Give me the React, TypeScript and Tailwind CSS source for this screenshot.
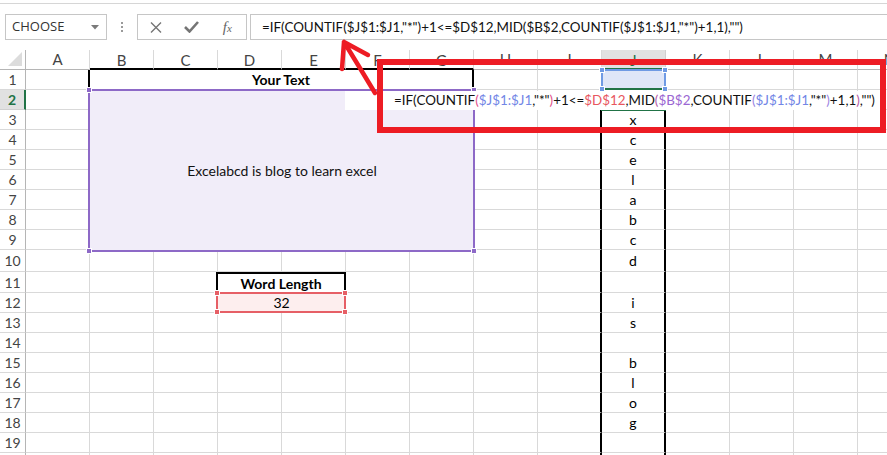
import React from 'react';

const cols = ['A', 'B', 'C', 'D', 'E', 'F', 'G', 'H', 'I', 'J', 'K', 'L', 'M', 'N'];
const jLetters: Record<number, string> = {
  3: 'x', 4: 'c', 5: 'e', 6: 'l', 7: 'a', 8: 'b', 9: 'c', 10: 'd',
  12: 'i', 13: 's', 15: 'b', 16: 'l', 17: 'o', 18: 'g',
};

function Handles({ cls }: { cls: string }) {
  return (
    <>
      <div className={`absolute -left-[4px] -top-[4px] h-[6px] w-[6px] border border-white ${cls}`} />
      <div className={`absolute -right-[4px] -top-[4px] h-[6px] w-[6px] border border-white ${cls}`} />
      <div className={`absolute -left-[4px] -bottom-[4px] h-[6px] w-[6px] border border-white ${cls}`} />
      <div className={`absolute -right-[4px] -bottom-[4px] h-[6px] w-[6px] border border-white ${cls}`} />
    </>
  );
}

function Formula({ colored }: { colored: boolean }) {
  const blue = colored ? 'text-[#7286e6]' : '';
  const red = colored ? 'text-[#e8575f]' : '';
  const purple = colored ? 'text-[#9a66d2]' : '';
  const pink = colored ? 'text-[#e2508a]' : '';
  const mauve = colored ? 'text-[#b45aa6]' : '';
  const lav = colored ? 'text-[#9c84e2]' : '';
  return (
    <span className="whitespace-pre">
      =IF(COUNTIF<span className={pink}>(</span>
      <span className={blue}>$J$1:$J1</span>,"*"<span className={pink}>)</span>+1&lt;=
      <span className={red}>$D$12</span>,MID<span className={mauve}>(</span>
      <span className={purple}>$B$2</span>,COUNTIF<span className={lav}>(</span>
      <span className={blue}>$J$1:$J1</span>,"*"<span className={lav}>)</span>+1,1
      <span className={mauve}>)</span>,"")
    </span>
  );
}

const grid = 'border-r border-b border-[#d9d9d9]';

function renderCell(r: number, c: number) {
  const key = `${r}-${c}`;
  if (r === 1 && c >= 2 && c <= 6) return null;
  if (r >= 2 && r <= 9 && c >= 1 && c <= 6 && !(r === 2 && c === 1)) return null;
  if ((r === 11 || r === 12) && c === 4) return null;

  if (r === 1 && c === 0)
    return <div key={key} className="border-b border-b-[#d9d9d9] border-r-2 border-r-black" />;
  if (r === 1 && c === 1)
    return (
      <div key={key} className="col-span-6 flex items-center justify-center border-b border-b-[#d9d9d9] border-r-2 border-r-black text-[14px] font-bold text-black">
        Your Text
      </div>
    );
  if (r === 2 && c === 1)
    return (
      <div key={key} className="relative col-span-6 row-span-8 flex items-center justify-center bg-[#f1edf9] text-[14px] text-[#111]">
        <span className="relative">Excelabcd is blog to learn excel</span>
        <div className="absolute -bottom-[2px] -left-[2px] -right-[1px] -top-[1px] z-10 border-2 border-[#8d69c7]">
          <Handles cls="bg-[#8d69c7]" />
        </div>
      </div>
    );
  if (r === 11 && c === 2)
    return <div key={key} className="border-b border-b-[#d9d9d9] border-r-2 border-r-black" />;
  if (r === 11 && c === 3)
    return (
      <div key={key} className="col-span-2 flex items-center justify-center border-b border-b-[#d9d9d9] border-r-2 border-t-2 border-r-black border-t-black pt-[1px] text-[14px] font-bold text-black">
        Word Length
      </div>
    );
  if (r === 12 && c === 3)
    return (
      <div key={key} className={`relative col-span-2 flex items-center justify-center bg-[#fdeeee] text-[14px] text-black ${grid}`}>
        32
        <div className="absolute -bottom-[1px] -left-[2px] -right-[1px] -top-[1px] z-10 border-2 border-[#e65f66]">
          <Handles cls="bg-[#e65f66]" />
        </div>
      </div>
    );
  if (r >= 3 && c === 8)
    return <div key={key} className="border-b border-b-[#d9d9d9] border-r-2 border-r-black" />;
  if (c === 9) {
    if (r === 1)
      return (
        <div key={key} className={`relative bg-[#dfe6f8] ${grid}`}>
          <div className="absolute -left-[1px] -right-[1px] -top-[1px] bottom-[1px] z-20 border-2 border-b-0 border-[#6f9ae4]">
            <Handles cls="bg-[#6f9ae4]" />
          </div>
        </div>
      );
    if (r === 2)
      return (
        <div key={key} className={`relative ${grid}`}>
          <div className="absolute -left-[1px] -right-[1px] -top-[2px] bottom-[-2px] z-10 border-y-2 border-[#217346]" />
        </div>
      );
    return (
      <div key={key} className="flex items-center justify-center border-b border-b-[#d9d9d9] border-r-2 border-r-black text-[14px] text-black">
        {jLetters[r] ?? ''}
      </div>
    );
  }
  return <div key={key} className={grid} />;
}

export default function App() {
  const rows = Array.from({ length: 20 }, (_, i) => i + 1);
  return (
    <div className="relative h-[455px] w-[887px] overflow-hidden bg-white font-['Lato',sans-serif] text-black">
      <div className="h-[50px] bg-white">
        <div className="h-[4px] border-b border-[#d6d6d6]" />
        <div className="mt-[10px] flex h-[26px] items-stretch">
          <div className="ml-[5px] flex w-[102px] items-center justify-between border border-[#c6c6c6] pl-[6px] pr-[6px] font-['Open_Sans',sans-serif] text-[13px] text-[#333]">
            <span>CHOOSE</span>
            <svg width="8" height="5" viewBox="0 0 8 5" className="mr-[1px]">
              <path d="M0 0 L8 0 L4 4.5 Z" fill="#7a7a7a" />
            </svg>
          </div>
          <div className="flex w-[30px] flex-col items-center justify-center gap-[2px]">
            <div className="h-[2px] w-[2px] bg-[#9a9a9a]" />
            <div className="h-[2px] w-[2px] bg-[#9a9a9a]" />
            <div className="h-[2px] w-[2px] bg-[#9a9a9a]" />
          </div>
          <div className="flex w-[110px] items-center border border-[#c6c6c6]">
            <div className="flex w-[36px] justify-center">
              <svg width="12" height="11" viewBox="0 0 12 11">
                <path d="M1 0.5 L11 10.5 M11 0.5 L1 10.5" stroke="#757575" strokeWidth="1.4" />
              </svg>
            </div>
            <div className="flex w-[36px] justify-center">
              <svg width="15" height="12" viewBox="0 0 15 12">
                <path d="M1 6 L5.5 10.5 L14 1" stroke="#757575" strokeWidth="2.6" fill="none" />
              </svg>
            </div>
            <div className="flex w-[38px] justify-center font-['Liberation_Serif',serif] text-[15px] italic text-[#666]">
              <span>
                f<span className="text-[11px]">x</span>
              </span>
            </div>
          </div>
          <div className="ml-[3px] flex flex-1 items-center border border-r-0 border-[#c6c6c6] pl-[11px] text-[13.4px] text-[#111]">
            <Formula colored={false} />
          </div>
        </div>
      </div>

      <div className="grid grid-cols-[26px_repeat(14,64px)] grid-rows-[20px_repeat(9,20px)_22px_21px_repeat(9,20px)]">
        <div className="relative border-b border-r border-[#b5b5b5]">
          <svg width="14" height="14" viewBox="0 0 14 14" className="absolute bottom-[3px] right-[3px]">
            <path d="M14 0 L14 14 L0 14 Z" fill="#dcdcdc" />
          </svg>
        </div>
        {cols.map((l, i) => (
          <div
            key={l}
            className={
              i === 9
                ? 'flex items-center justify-center border-b-2 border-r border-b-[#217346] border-r-[#d0d0d0] bg-[#e1e1e1] pt-[2px] text-[15px] text-[#217346]'
                : i >= 1 && i <= 6
                  ? 'flex items-center justify-center border-b-2 border-r border-b-black border-r-[#d9d9d9] pt-[2px] text-[15px] text-[#444]'
                  : 'flex items-center justify-center border-b border-r border-b-[#b5b5b5] border-r-[#d9d9d9] text-[15px] text-[#444]'
            }
          >
            {l}
          </div>
        ))}
        {rows.map((r) => (
          <React.Fragment key={r}>
            <div
              className={
                r === 2
                  ? 'flex items-center justify-center border-b border-r-2 border-b-[#d0d0d0] border-r-[#217346] bg-[#e1e1e1] text-[14px] font-bold text-[#217346]'
                  : 'flex items-center justify-center border-b border-r border-b-[#d9d9d9] border-r-[#b5b5b5] text-[14px] text-[#444]'
              }
            >
              {r}
            </div>
            {cols.map((_, c) => renderCell(r, c))}
          </React.Fragment>
        ))}
      </div>

      <div className="absolute left-[345px] top-[91px] z-30 flex h-[19px] w-[535px] items-center bg-white pl-[49px] text-[13.4px] text-[#111]">
        <Formula colored={true} />
      </div>

      <div className="absolute left-[377px] top-[59px] z-40 h-[74px] w-[509px] border-[6px] border-[#ed1c24]" />

      <svg className="pointer-events-none absolute left-0 top-0 z-50" width="887" height="455" viewBox="0 0 887 455">
        <path
          d="M375 93 Q360 68 344 42 M344 42 L342 69 M344 42 L368 55"
          stroke="#ed1c24"
          strokeWidth="4.5"
          strokeLinecap="round"
          strokeLinejoin="round"
          fill="none"
        />
      </svg>
    </div>
  );
}
